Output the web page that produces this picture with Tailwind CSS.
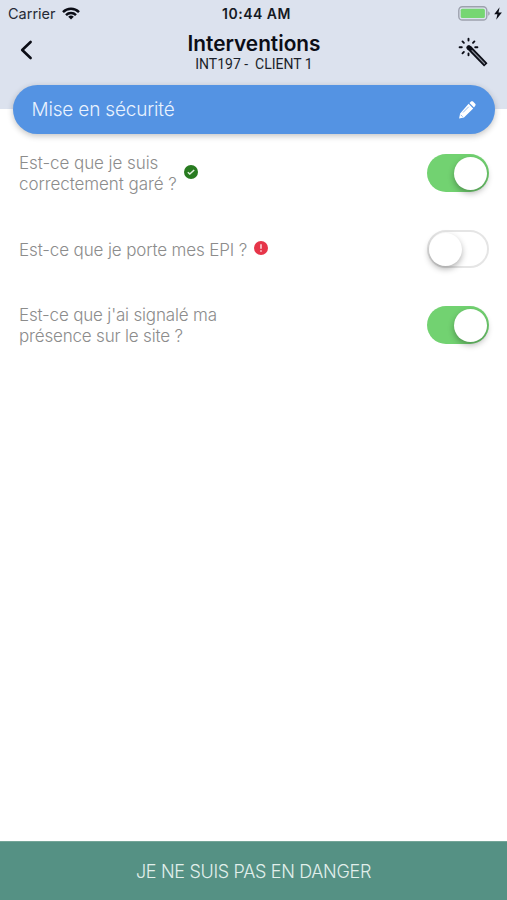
<!DOCTYPE html>
<html lang="fr">
<head>
<meta charset="utf-8">
<title>Interventions</title>
<script src="https://cdn.jsdelivr.net/npm/@tailwindcss/browser@4"></script>
</head>
<body class="bg-white">
<div class="flex h-[900px] w-[507px] flex-col overflow-hidden bg-white font-['Inter','Liberation_Sans',sans-serif]">
  <header class="h-[109px] shrink-0 bg-[#dce2ee] text-[#0b0d16]">
    <div class="grid h-7 grid-cols-3 items-center pr-[5px] pl-2">
      <div class="flex items-center gap-[6px] text-[14.5px] text-[#252a35]">
        <span>Carrier</span>
        <svg class="-mt-[2px] h-[13px] w-[18px]" viewBox="0 0 18 13" fill="none" stroke="#0b0d16" stroke-width="2.5"><path d="M1 5.1a11.5 11.5 0 0 1 16 0M4 8.1a7.2 7.2 0 0 1 10 0"/><path d="M9 12.5 6.2 9.8a4 4 0 0 1 5.6 0Z" fill="#0b0d16" stroke="none"/></svg>
      </div>
      <div class="-mt-px pl-[3px] text-center text-[14px] leading-5 font-semibold tracking-[0.5px] whitespace-nowrap text-[#151923]">10:44 AM</div>
      <div class="-mt-[2px] flex items-center justify-end gap-1">
        <svg class="h-[15px] w-[32px]" viewBox="0 0 32 15"><rect x=".8" y=".8" width="28" height="13.2" rx="3.6" fill="none" stroke="#9da1ad" stroke-width="1.4"/><rect x="2.7" y="2.7" width="24.2" height="9.4" rx="1.6" fill="#76d672"/><path d="M30.2 5.2c2 .8 2 3.7 0 4.5Z" fill="#9da1ad"/></svg>
        <svg class="h-[13px] w-[8px]" viewBox="0 0 8 13" fill="#0b0d16"><path d="M5.6.3.2 7.2h3.2L2.2 12.7 7.9 5.4H4.5Z"/></svg>
      </div>
    </div>
    <div class="flex h-[52px] items-start justify-between pr-[19px] pl-[20px]">
      <svg class="mt-[12px] h-[20px] w-[30px]" viewBox="0 0 30 20" fill="none" stroke="#0b0d16" stroke-width="2.6" stroke-linecap="round" stroke-linejoin="round"><path d="M10.6 2 2.2 10l8.4 8"/></svg>
      <div class="flex flex-col items-center pt-[4px]">
        <h1 class="text-[20.8px] leading-6 font-semibold">Interventions</h1>
        <p class="text-[14px] leading-4 font-normal tracking-[0px] whitespace-pre text-[#1b1f2a] [font-family:Roboto,sans-serif]">INT197 -  CLIENT 1</p>
      </div>
      <svg class="mt-[9px] h-[30px] w-[30px]" viewBox="0 0 30 30" fill="none" stroke="#0b0d16" stroke-linecap="round"><path d="M11 10.5 27.8 27.8" stroke-width="4.8" stroke-linecap="butt"/><path d="M14 13.6 26.5 26.5" stroke="#8a8e99" stroke-width="1.2"/><path d="M10.5 1.8v1.8M10.5 16.4v1.8M1.6 10.3h2.2M17.2 10.3h2.2M4.5 4.4l1.4 1.4M16.4 4.4l-1.4 1.4M4.5 16.3l1.4-1.4" stroke-width="1.9"/><circle cx="10.8" cy="10.6" r="2" fill="#0b0d16" stroke-width="1"/></svg>
    </div>
  </header>
  <div class="relative z-10 mr-[12px] ml-[13px] -mt-[24px] flex h-[49px] shrink-0 items-center justify-between rounded-full bg-[#5493e3] pr-[19px] pl-[18.5px] shadow-[0_2px_6px_rgba(0,0,0,0.24)]">
    <span class="pt-[2px] text-[19px] font-light tracking-[-0.18px] text-[#e9f2fe]">Mise en sécurité</span>
    <svg class="h-[18px] w-[18px]" viewBox="0 0 18 18" fill="#fff"><path d="m10.6 2.8 4.6 4.6-9.2 9.2-4.9 1 1-5.2ZM11.5 2l1.5-1.4c.6-.5 1.4-.5 2 0l2.2 2.2c.6.6.6 1.4 0 2L16 6.4Z"/><path d="m5 11.5 5.8-5.8M2.7 13.8l2 2" stroke="#75a7e8" stroke-width=".8"/></svg>
  </div>
  <main class="flex flex-1 flex-col pt-[1px] pr-[18.5px] pl-[19px] text-[17px] leading-[21px] font-light tracking-[-0.13px] text-[#8c8c8c]">
    <section class="flex h-[76px] items-center justify-between">
      <div class="flex items-center gap-[7px]"><p class="pt-[2px] tracking-[-0.07px]">Est-ce que je suis<br>correctement garé ?</p>
        <svg class="-mt-[2px] h-[14px] w-[14px]" viewBox="0 0 14 14"><circle cx="7" cy="7" r="7" fill="#287b20"/><path d="m3.8 7.2 2 1.8L10.2 5" fill="none" stroke="#e1f0df" stroke-width="1.5"/></svg></div>
      <div class="flex h-[38px] w-[62px] items-center justify-end rounded-full bg-[#72d271] p-[2px]"><div class="h-[33px] w-[33px] rounded-full bg-white shadow-[0_3px_6px_rgba(0,0,0,0.3)]"></div></div>
    </section>
    <section class="flex h-[76px] items-center justify-between">
      <div class="flex items-center gap-[7px]"><p class="pt-[2px]">Est-ce que je porte mes EPI ?</p>
        <svg class="-mt-[2px] h-[14px] w-[14px]" viewBox="0 0 14 14"><circle cx="7" cy="7" r="7" fill="#e63549"/><path d="M7 3.2v4.6M7 9.3v1.4" stroke="#ffe8eb" stroke-width="1.4"/></svg></div>
      <div class="flex h-[38px] w-[62px] items-center rounded-full border-2 border-[#e5e5e5] bg-white"><div class="h-[33px] w-[33px] rounded-full bg-white shadow-[0_3px_6px_rgba(0,0,0,0.3)]"></div></div>
    </section>
    <section class="flex h-[76px] items-center justify-between">
      <p class="pt-[2px] tracking-[-0.18px]">Est-ce que j'ai signalé ma<br>présence sur le site ?</p>
      <div class="flex h-[38px] w-[62px] items-center justify-end rounded-full bg-[#72d271] p-[2px]"><div class="h-[33px] w-[33px] rounded-full bg-white shadow-[0_3px_6px_rgba(0,0,0,0.3)]"></div></div>
    </section>
  </main>
  <button class="flex h-[59px] shrink-0 items-center justify-center border-t border-[#74a598] bg-[#559184] text-[18px] font-light tracking-[-0.33px] text-[#e1efeb]">JE NE SUIS PAS EN DANGER</button>
</div>
</body>
</html>
